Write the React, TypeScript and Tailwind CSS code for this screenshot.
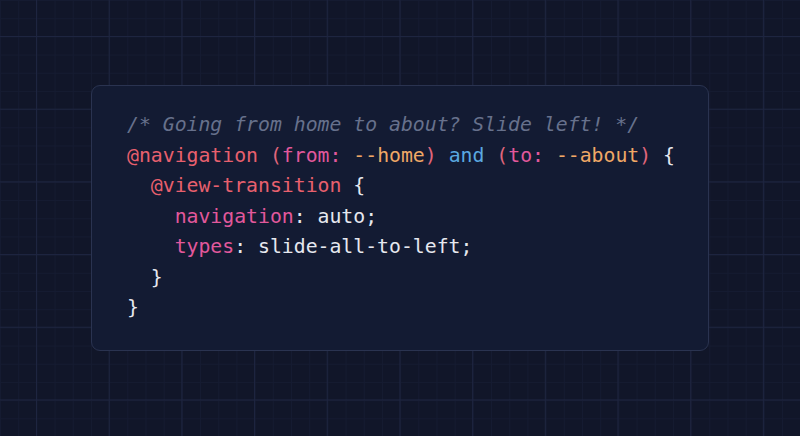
import React from "react";

const C = {
  comment: "text-[#67718c] italic",
  at: "text-[#e8606e]",
  paren: "text-[#e0667c]",
  kw: "text-[#e2589c]",
  val: "text-[#f0a866]",
  and: "text-[#5aa8e0]",
  plain: "text-[#e6e8ef]",
};

function L({ children }: { children: React.ReactNode }) {
  return <div className="h-[30.5px] leading-[30.5px] whitespace-pre">{children}</div>;
}

export default function App() {
  return (
    <div
      className="w-[800px] h-[436px] flex items-center justify-center bg-[#111629] bg-[linear-gradient(to_right,#1e2540_1px,transparent_1px),linear-gradient(to_bottom,#1e2540_1px,transparent_1px),linear-gradient(to_right,#151b31_1px,transparent_1px),linear-gradient(to_bottom,#151b31_1px,transparent_1px)] bg-[size:72.7px_72.7px,72.7px_72.7px,18.2px_18.2px,18.2px_18.2px] bg-[position:36px_36px,36px_36px,0_0,0_0]"
    >
      <div
        className="w-[618px] h-[266px] rounded-[9px] border border-[#2a3350] bg-[#131b33] pl-[35px] pt-[24px] text-[19.8px] font-['DejaVu_Sans_Mono',monospace]"
      >
        <L>
          <span className={C.comment}>/* Going from home to about? Slide left! */</span>
        </L>
        <L>
          <span className={C.at}>@navigation</span>
          <span className={C.plain}> </span>
          <span className={C.paren}>(</span>
          <span className={C.kw}>from:</span>
          <span className={C.plain}> </span>
          <span className={C.val}>--home</span>
          <span className={C.paren}>)</span>
          <span className={C.plain}> </span>
          <span className={C.and}>and</span>
          <span className={C.plain}> </span>
          <span className={C.paren}>(</span>
          <span className={C.kw}>to:</span>
          <span className={C.plain}> </span>
          <span className={C.val}>--about</span>
          <span className={C.paren}>)</span>
          <span className={C.plain}> {"{"}</span>
        </L>
        <L>
          <span className={C.plain}>  </span>
          <span className={C.at}>@view-transition</span>
          <span className={C.plain}> {"{"}</span>
        </L>
        <L>
          <span className={C.plain}>    </span>
          <span className={C.kw}>navigation</span>
          <span className={C.plain}>: auto;</span>
        </L>
        <L>
          <span className={C.plain}>    </span>
          <span className={C.kw}>types</span>
          <span className={C.plain}>: slide-all-to-left;</span>
        </L>
        <L>
          <span className={C.plain}>  {"}"}</span>
        </L>
        <L>
          <span className={C.plain}>{"}"}</span>
        </L>
      </div>
    </div>
  );
}
